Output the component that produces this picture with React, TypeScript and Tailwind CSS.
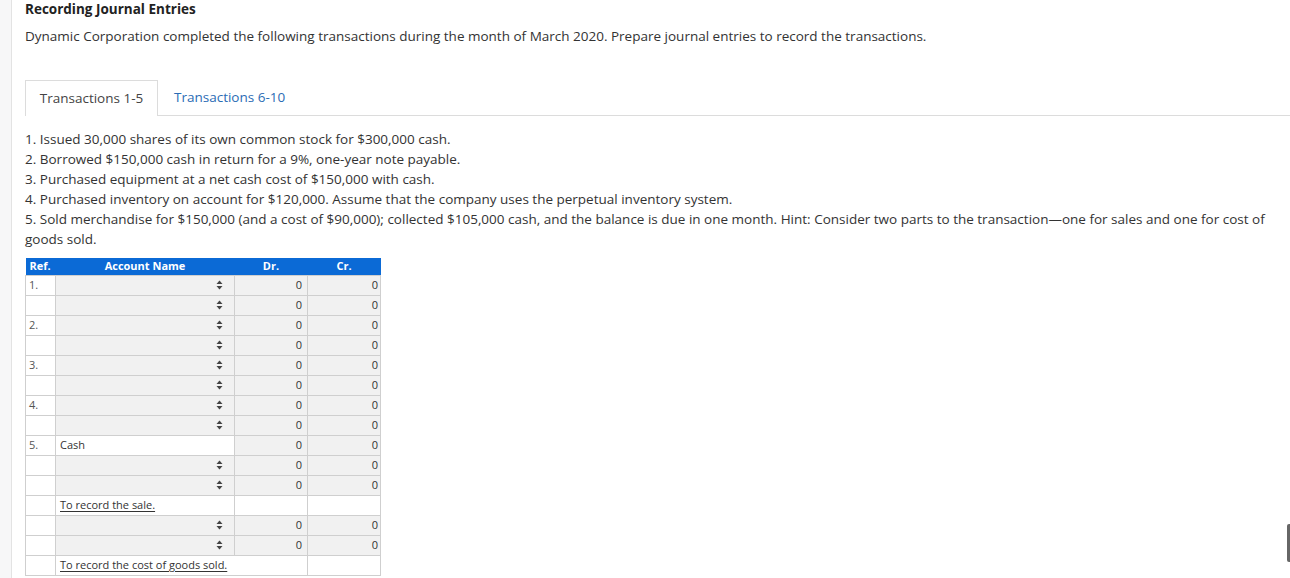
import React from "react";

type Row =
  | { kind: "entry"; ref?: string; account?: string }
  | { kind: "memo"; text: string; wide?: boolean };

const ROWS: Row[] = [
  { kind: "entry", ref: "1." },
  { kind: "entry" },
  { kind: "entry", ref: "2." },
  { kind: "entry" },
  { kind: "entry", ref: "3." },
  { kind: "entry" },
  { kind: "entry", ref: "4." },
  { kind: "entry" },
  { kind: "entry", ref: "5.", account: "Cash" },
  { kind: "entry" },
  { kind: "entry" },
  { kind: "memo", text: "To record the sale." },
  { kind: "entry" },
  { kind: "entry" },
  { kind: "memo", text: "To record the cost of goods sold.", wide: true },
];

const TRANSACTIONS = [
  "1. Issued 30,000 shares of its own common stock for $300,000 cash.",
  "2. Borrowed $150,000 cash in return for a 9%, one-year note payable.",
  "3. Purchased equipment at a net cash cost of $150,000 with cash.",
  "4. Purchased inventory on account for $120,000. Assume that the company uses the perpetual inventory system.",
  "5. Sold merchandise for $150,000 (and a cost of $90,000); collected $105,000 cash, and the balance is due in one month. Hint: Consider two parts to the transaction\u2014one for sales and one for cost of goods sold.",
];

function Sorter() {
  return (
    <svg width="7" height="10" viewBox="0 0 7 10" className="shrink-0">
      <path d="M3.5 0.5 L6.5 4 L0.5 4 Z" fill="#444" />
      <path d="M3.5 9.5 L6.5 6 L0.5 6 Z" fill="#444" />
    </svg>
  );
}

export default function App() {
  return (
    <div className="relative flex h-[578px] w-[1290px] overflow-hidden bg-white font-['Open_Sans',sans-serif] text-[#333]">
      <div className="w-[12px] shrink-0 border-r border-[#e3e3e3] bg-[#f7f7f8]" />

      <div className="flex-1 pl-[13px]">
        <h1 className="text-[13.5px] font-bold leading-[18px] text-[#222]">Recording Journal Entries</h1>
        <p className="mt-[9px] text-[13.5px] leading-[18px]">
          Dynamic Corporation completed the following transactions during the month of March 2020. Prepare journal entries to record the transactions.
        </p>

        {/* Tabs */}
        <div className="mt-[35px] flex h-[36px] items-stretch">
          <div className="flex w-[133px] items-center justify-center border border-b-0 border-[#dcdcdc] bg-white text-[13.5px] text-[#444]">
            Transactions 1-5
          </div>
          <div className="flex flex-1 items-center border-b border-[#dcdcdc] pl-[16px] text-[13.5px] text-[#2b6cb5]">
            Transactions 6-10
          </div>
        </div>

        <div className="mt-[13px] pr-[20px] text-[13.5px] leading-[20px]">
          {TRANSACTIONS.map((t) => (
            <p key={t}>{t}</p>
          ))}
        </div>

        {/* Journal table */}
        <table className="mt-[9px] w-[356px] table-fixed border-collapse text-[11px]">
          <colgroup>
            <col className="w-[30px]" />
            <col className="w-[179px]" />
            <col className="w-[73px]" />
            <col className="w-[73px]" />
          </colgroup>
          <thead>
            <tr className="h-[17px] bg-[#0b6ad6] font-bold text-white">
              <th className="pl-[4px] text-left font-bold">Ref.</th>
              <th className="text-center font-bold">Account Name</th>
              <th className="text-center font-bold">Dr.</th>
              <th className="text-center font-bold">Cr.</th>
            </tr>
          </thead>
          <tbody>
            {ROWS.map((r, i) =>
              r.kind === "memo" ? (
                <tr key={i} className="h-[20px]">
                  <td className="border border-[#cfcfcf]" />
                  <td colSpan={r.wide ? 2 : 1} className="border border-[#cfcfcf] pl-[4px] text-left whitespace-nowrap">
                    <span className="underline underline-offset-2">{r.text}</span>
                  </td>
                  {!r.wide && <td className="border border-[#cfcfcf]" />}
                  <td className="border border-[#cfcfcf]" />
                </tr>
              ) : (
                <tr key={i} className="h-[20px]">
                  <td className="border border-[#cfcfcf] pl-[3px] text-[#555]">{r.ref}</td>
                  {r.account ? (
                    <td className="border border-[#cfcfcf] bg-white pl-[4px]">{r.account}</td>
                  ) : (
                    <td className="border border-[#cfcfcf] bg-[#f1f1f1] pr-[11px]">
                      <div className="flex justify-end">
                        <Sorter />
                      </div>
                    </td>
                  )}
                  <td className="border border-[#cfcfcf] bg-[#f1f1f1] pr-[5px] text-right">0</td>
                  <td className="border border-[#cfcfcf] bg-[#f1f1f1] pr-[2px] text-right">0</td>
                </tr>
              )
            )}
          </tbody>
        </table>
      </div>

      {/* scroll handle peeking at the right edge */}
      <div className="absolute right-0 top-[524px] h-[38px] w-[3px] rounded-l-[2px] bg-[#666]" />
    </div>
  );
}
